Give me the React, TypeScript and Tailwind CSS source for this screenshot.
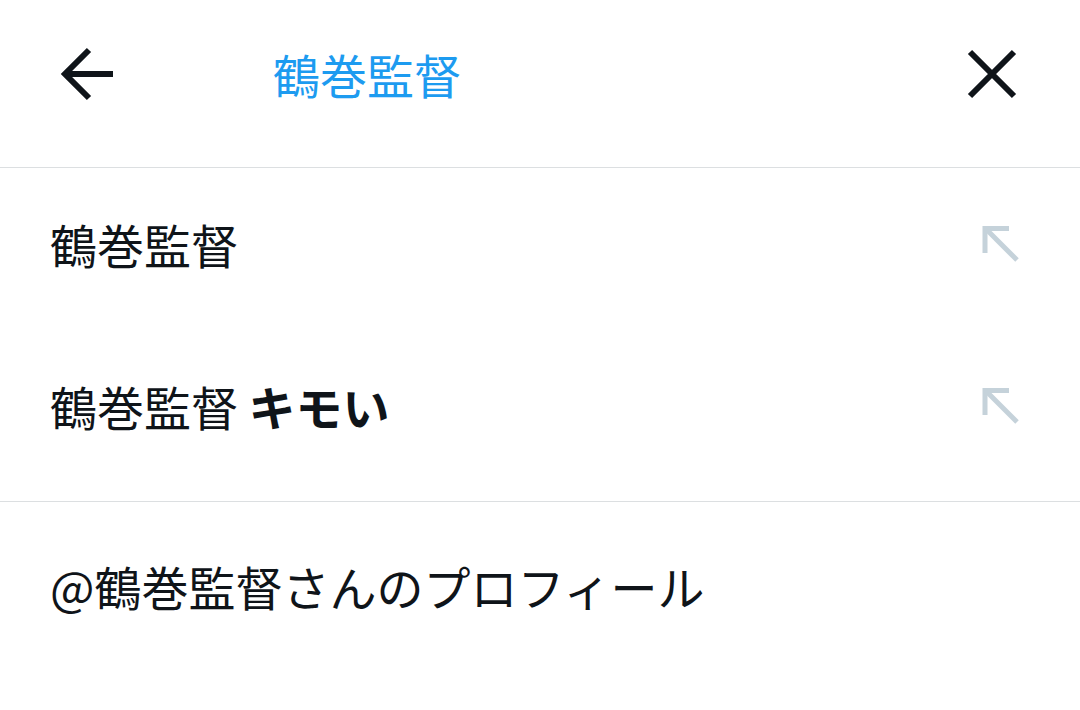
import React from "react";

const font = { fontFamily: '"Noto Sans CJK JP", "Noto Sans", sans-serif' };

function UpLeft() {
  return (
    <svg width="40" height="40" viewBox="0 0 40 40" fill="none">
      <path d="M5 30 V5.5 H29" stroke="#c5d2da" strokeWidth="5" strokeLinecap="butt" strokeLinejoin="miter" />
      <path d="M6 6 L37 37" stroke="#c5d2da" strokeWidth="5" />
    </svg>
  );
}

export default function App() {
  return (
    <div className="w-[1080px] h-[710px] bg-white text-[#0f1419] overflow-hidden" style={font}>
      <div className="h-[168px] border-b border-[#dcdfe1]">
        <div className="h-[148px] flex items-center">
          <div className="ml-[56px] w-[64px] h-[64px] flex items-center justify-center">
            <svg width="64" height="64" viewBox="0 0 64 64" fill="none">
              <path d="M57 32 H11" stroke="#0f1419" strokeWidth="6" />
              <path d="M33 8 L9 32 L33 56" stroke="#0f1419" strokeWidth="6" strokeLinejoin="miter" />
            </svg>
          </div>
          <div className="ml-[153px] text-[47px] leading-none text-[#1d9bf0] pb-[2px]">鶴巻監督</div>
          <div className="ml-auto mr-[56px] w-[64px] h-[64px] flex items-center justify-center">
            <svg width="64" height="64" viewBox="0 0 64 64" fill="none">
              <path d="M10 10 L54 54 M54 10 L10 54" stroke="#0f1419" strokeWidth="6" />
            </svg>
          </div>
        </div>
      </div>
      <div className="border-b border-[#dcdfe1] pb-[9px]">
        <div className="h-[162px] flex items-center justify-between pl-[50px] pr-[60px] pb-[12px]">
          <div className="text-[47px] leading-none">鶴巻監督</div>
          <UpLeft />
        </div>
        <div className="h-[162px] flex items-center justify-between pl-[50px] pr-[60px] pb-[12px]">
          <div className="text-[47px] leading-none">
            鶴巻監督 <span className="font-bold">キモい</span>
          </div>
          <UpLeft />
        </div>
      </div>
      <div className="h-[176px] flex items-center pl-[50px] pb-[10px]">
        <div className="text-[47px] leading-none">@鶴巻監督さんのプロフィール</div>
      </div>
    </div>
  );
}
